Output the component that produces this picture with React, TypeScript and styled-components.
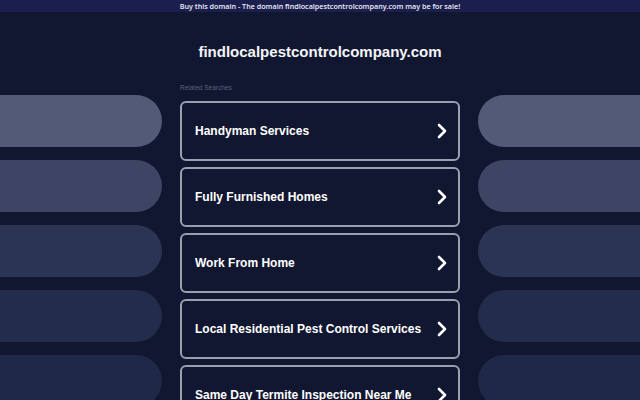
import { FC } from "react";
import styled, { createGlobalStyle } from "styled-components";

const searches = [
    "Handyman Services",
    "Fully Furnished Homes",
    "Work From Home",
    "Local Residential Pest Control Services",
    "Same Day Termite Inspection Near Me",
];

const pillColors = ["#525a77", "#3e4564", "#2c3454", "#232c4b", "#1f2847"];

const GlobalStyle = createGlobalStyle`
    html, body {
        margin: 0;
        padding: 0;
        background: #111730;
        overflow: hidden;
    }
    body {
        font-family: "Liberation Sans", Arial, sans-serif;
        color: #ffffff;
    }
`;

const Page = styled.div`
    width: 640px;
    height: 400px;
    overflow: hidden;
    background: #111730;
`;

const TopBar = styled.div`
    height: 12px;
    background: #1b1f4d;
    display: flex;
    align-items: center;
    justify-content: center;
    font-family: "Open Sans", sans-serif;
    font-size: 7.2px;
    font-weight: 600;
    color: #f0f0f8;
`;

const Title = styled.h1`
    margin: 0;
    padding-top: 31px;
    height: 29px;
    text-align: center;
    font-size: 15px;
    font-weight: 700;
    color: #f4f5f8;
`;

const Body = styled.div`
    display: grid;
    grid-template-columns: 162px 1fr 162px;
    column-gap: 18px;
`;

const SideColumn = styled.div<{ $side: "left" | "right" }>`
    display: flex;
    flex-direction: column;
    gap: 13px;
    padding-top: 23px;
    margin-left: ${(p) => (p.$side === "left" ? "-40px" : "0")};
    margin-right: ${(p) => (p.$side === "right" ? "-40px" : "0")};
`;

const Pill = styled.div<{ $color: string; $side: "left" | "right" }>`
    height: 52px;
    flex-shrink: 0;
    background: ${(p) => p.$color};
    border-radius: ${(p) => (p.$side === "left" ? "0 26px 26px 0" : "26px 0 0 26px")};
`;

const Center = styled.div`
    display: flex;
    flex-direction: column;
`;

const Label = styled.div`
    font-size: 6.5px;
    color: #5b6180;
    height: 12px;
    line-height: 12px;
    margin: 10px 0 7px;
`;

const List = styled.div`
    display: flex;
    flex-direction: column;
    gap: 6px;
`;

const Card = styled.a`
    box-sizing: border-box;
    height: 60px;
    flex-shrink: 0;
    border: 2px solid #9aa0ae;
    border-radius: 6px;
    display: flex;
    align-items: center;
    justify-content: space-between;
    padding: 0 10px 0 13px;
    color: #ffffff;
    text-decoration: none;
    font-size: 12px;
    font-weight: 700;
    white-space: nowrap;
`;

const Chevron: FC = () => (
    <svg width="12" height="16" viewBox="0 0 12 16">
        <path d="M3 2 L9 8 L3 14" fill="none" stroke="#ffffff" strokeWidth="2.6" strokeLinecap="round" strokeLinejoin="round" />
    </svg>
);

export default function App() {
    return (
        <Page>
            <GlobalStyle />
            <TopBar>Buy this domain - The domain findlocalpestcontrolcompany.com may be for sale!</TopBar>
            <Title>findlocalpestcontrolcompany.com</Title>
            <Body>
                <SideColumn $side="left">
                    {pillColors.map((c) => (
                        <Pill key={c} $color={c} $side="left" />
                    ))}
                </SideColumn>
                <Center>
                    <Label>Related Searches</Label>
                    <List>
                        {searches.map((s) => (
                            <Card key={s} href="#">
                                {s}
                                <Chevron />
                            </Card>
                        ))}
                    </List>
                </Center>
                <SideColumn $side="right">
                    {pillColors.map((c) => (
                        <Pill key={c} $color={c} $side="right" />
                    ))}
                </SideColumn>
            </Body>
        </Page>
    );
}
